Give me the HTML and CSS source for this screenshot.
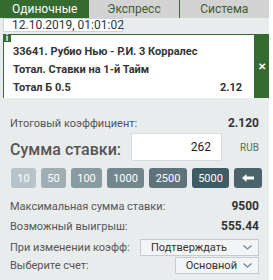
FILE: index.html
```html
<!DOCTYPE html>
<html lang="ru">
<head>
    <meta charset="UTF-8">
    <title>Купон</title>
    <link rel="stylesheet" href="styles.css">
</head>
<body>
    <div class="coupon">
        <!-- вкладки -->
        <div class="tabs">
            <div class="tab active">Одиночные</div>
            <div class="tab">Экспресс</div>
            <div class="tab last">Система</div>
        </div>

        <div class="date">12.10.2019, 01:01:02</div>

        <!-- ставка -->
        <div class="bet">
            <div class="bet-body">
                <span class="info">i</span>
                <div class="bet-line">33641. Рубио Нью - Р.И. 3 Корралес</div>
                <div class="bet-line">Тотал. Ставки на 1-й Тайм</div>
                <div class="bet-line split"><span>Тотал Б 0.5</span><span>2.12</span></div>
            </div>
            <div class="bet-close">&#x2715;</div>
        </div>

        <div class="row first">
            <span>Итоговый коэффициент:</span>
            <b>2.120</b>
        </div>

        <div class="stake">
            <span class="stake-label">Сумма ставки:</span>
            <div class="stake-input">262</div>
            <span class="currency">RUB</span>
        </div>

        <div class="quick">
            <button class="q1">10</button>
            <button class="q2">50</button>
            <button class="q3">100</button>
            <button class="q4">1000</button>
            <button class="q5">2500</button>
            <button class="q6">5000</button>
            <button class="q7">
                <svg width="12" height="8" viewBox="0 0 12 8"><path d="M0 4 L4.5 0 L4.5 2.6 L12 2.6 L12 5.4 L4.5 5.4 L4.5 8 Z" fill="#fff"/></svg>
            </button>
        </div>

        <div class="row">
            <span>Максимальная сумма ставки:</span>
            <b>9500</b>
        </div>
        <div class="row">
            <span>Возможный выигрыш:</span>
            <b>555.44</b>
        </div>
        <div class="row sel-row top">
            <span>При изменении коэфф:</span>
            <div class="select wide">Подтверждать <svg class="chev" width="9" height="5" viewBox="0 0 9 5"><path d="M0.5 0.5 L4.5 4 L8.5 0.5" fill="none" stroke="#6d8494" stroke-width="1.2"/></svg></div>
        </div>
        <div class="row sel-row">
            <span>Выберите счет:</span>
            <div class="select">Основной <svg class="chev" width="9" height="5" viewBox="0 0 9 5"><path d="M0.5 0.5 L4.5 4 L8.5 0.5" fill="none" stroke="#6d8494" stroke-width="1.2"/></svg></div>
        </div>
    </div>
</body>
</html>
```

FILE: styles.css
```css
body {
    margin: 0;
    background-color: #fff;
    font-family: Roboto, "Liberation Sans", Arial, sans-serif;
}
.coupon {
    width: 269px;
    height: 280px;
    background-color: #e9eced;
    overflow: hidden;
}
.tabs {
    display: flex;
    height: 18px;
}
.tab {
    flex: 1;
    background-color: #d3d3d3;
    color: #3f5c34;
    font-size: 12px;
    line-height: 18px;
    text-align: center;
}
.tab.active {
    background-color: #356a31;
    color: #fff;
}
.tab.last {
    border-left: 1px solid #356a31;
}
.date {
    width: 110px;
    height: 12px;
    margin-left: 3px;
    padding-left: 8px;
    background-color: #fff;
    border: 1px solid #c7d6e4;
    color: #333;
    font-size: 12px;
    line-height: 12px;
    white-space: nowrap;
}
.bet {
    display: flex;
    margin: 2px 0 0 3px;
    height: 64px;
}
.bet-body {
    position: relative;
    flex: 1;
    background-color: #fff;
    border-top: 1px solid #356a31;
    border-left: 1px solid #356a31;
    padding: 8px 12px 0 9px;
}
.info {
    position: absolute;
    left: -1px;
    top: -1px;
    width: 8px;
    height: 8px;
    background-color: #356a31;
    color: #fff;
    font-size: 9px;
    font-weight: bold;
    line-height: 8px;
    text-align: center;
}
.bet-line {
    font-size: 11px;
    font-weight: bold;
    color: #333;
    line-height: 18px;
}
.split {
    display: flex;
    justify-content: space-between;
}
.bet-close {
    width: 15px;
    background-color: #356a31;
    color: #fff;
    font-size: 10px;
    font-weight: bold;
    display: flex;
    align-items: center;
    justify-content: center;
}
.row {
    display: flex;
    justify-content: space-between;
    align-items: center;
    padding: 0 10px;
    height: 20px;
    font-size: 11px;
    color: #555;
}
.row b {
    font-size: 12px;
    color: #333;
}
.row.first {
    margin-top: 16px;
    height: 18px;
}
.stake {
    display: flex;
    align-items: center;
    padding: 0 10px;
    height: 30px;
}
.stake-label {
    width: 121px;
    font-size: 16px;
    font-weight: 500;
    color: #555;
    padding-top: 4px;
}
.stake-input {
    width: 91px;
    height: 28px;
    background-color: #fff;
    border: 1px solid #d9dcdd;
    box-sizing: border-box;
    text-align: right;
    padding-right: 10px;
    font-size: 12px;
    line-height: 26px;
    color: #222;
}
.currency {
    margin-left: auto;
    font-size: 10px;
    color: #666;
}
.quick {
    display: flex;
    gap: 5px;
    padding: 6px 0 0 11px;
    height: 20px;
    margin-bottom: 8px;
}
.quick button {
    border: none;
    border-radius: 3px;
    color: #fff;
    font-family: inherit;
    font-size: 11px;
    padding: 0;
    height: 20px;
}
.q1 { width: 25px; background-color: #b6c3c8; }
.q2 { width: 25px; background-color: #9eaeb3; }
.q3 { width: 31px; background-color: #889ba0; }
.q4 { width: 37px; background-color: #72878d; }
.q5 { width: 38px; background-color: #5e747a; }
.q6 { width: 37px; background-color: #3f5b63; }
.q7 { width: 28px; background-color: #4b636b; }
.sel-row {
    height: 18px;
}
.sel-row.top {
    margin-top: 2px;
}
.select {
    display: flex;
    align-items: center;
    justify-content: flex-end;
    gap: 6px;
    height: 17px;
    background-color: #f2f4f5;
    border: 1px solid #c3ccd1;
    box-sizing: border-box;
    padding: 0 6px 0 10px;
    font-size: 11px;
    color: #333;
}
.select.wide {
    width: 119px;
    justify-content: space-between;
}
```
